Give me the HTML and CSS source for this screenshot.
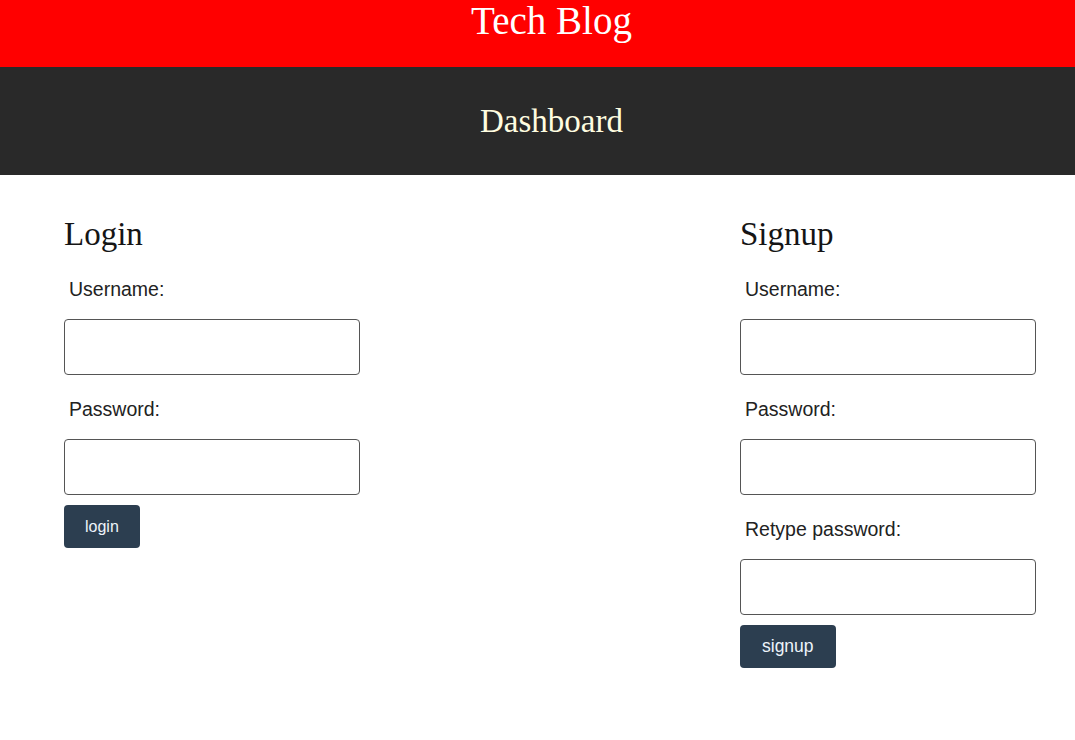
FILE: index.html
```html
<!DOCTYPE html>
<html lang="en">
<head>
<meta charset="utf-8">
<title>Tech Blog</title>
<link rel="stylesheet" href="styles.css">
</head>
<body>
<header class="site-header">
  <h1 class="site-title">Tech Blog</h1>
</header>
<nav class="page-bar">
  <h2 class="page-title">Dashboard</h2>
</nav>
<main class="forms">
  <form class="form-card">
    <h3 class="form-title">Login</h3>
    <label class="field-label" for="login-user">Username:</label>
    <input class="field-input" id="login-user" type="text">
    <label class="field-label" for="login-pass">Password:</label>
    <input class="field-input" id="login-pass" type="password">
    <button class="btn" type="button">login</button>
  </form>
  <form class="form-card">
    <h3 class="form-title">Signup</h3>
    <label class="field-label" for="signup-user">Username:</label>
    <input class="field-input" id="signup-user" type="text">
    <label class="field-label" for="signup-pass">Password:</label>
    <input class="field-input" id="signup-pass" type="password">
    <label class="field-label" for="signup-pass2">Retype password:</label>
    <input class="field-input" id="signup-pass2" type="password">
    <button class="btn btn-wide" type="button">signup</button>
  </form>
</main>
</body>
</html>
```
FILE: styles.css
```css
html, body {
  margin: 0;
  padding: 0;
  background: #ffffff;
}
body {
  font-family: "Liberation Serif", "Times New Roman", serif;
  color: #111111;
}
.site-header {
  background: #ff0000;
  height: 67px;
  display: flex;
  justify-content: center;
  padding-left: 28px;
}
.site-title {
  margin: 0;
  font-weight: normal;
  font-size: 39px;
  line-height: 42px;
  color: #ffffff;
}
.page-bar {
  background: #292929;
  height: 108px;
  display: flex;
  align-items: center;
  justify-content: center;
  padding-left: 28px;
}
.page-title {
  margin: 0;
  font-weight: normal;
  font-size: 33px;
  line-height: 40px;
  color: #fffde0;
}
.forms {
  display: flex;
  justify-content: space-between;
  align-items: flex-start;
  padding: 40px 39px 40px 64px;
}
.form-card {
  display: flex;
  flex-direction: column;
  align-items: flex-start;
  width: 296px;
}
.form-title {
  margin: 0;
  font-weight: normal;
  font-size: 33px;
  line-height: 38px;
  color: #151515;
}
.field-label {
  font-family: "Liberation Sans", Arial, sans-serif;
  font-size: 19.5px;
  line-height: 24px;
  color: #222222;
  padding-left: 5px;
  margin: 22px 0 18px;
}
.form-title + .field-label {
  margin-top: 24px;
}
.field-input {
  box-sizing: border-box;
  width: 296px;
  height: 56px;
  margin: 0;
  border: 1px solid #555555;
  border-radius: 4px;
  background: #ffffff;
  font-size: 16px;
}
.btn {
  margin-top: 10px;
  height: 43px;
  padding: 0 21px;
  border: none;
  border-radius: 4px;
  background: #2c3e50;
  color: #eef4fa;
  font-family: "Liberation Sans", Arial, sans-serif;
  font-size: 16px;
  cursor: pointer;
}
.btn-wide {
  padding: 0 22px;
  font-size: 17.5px;
}
```
